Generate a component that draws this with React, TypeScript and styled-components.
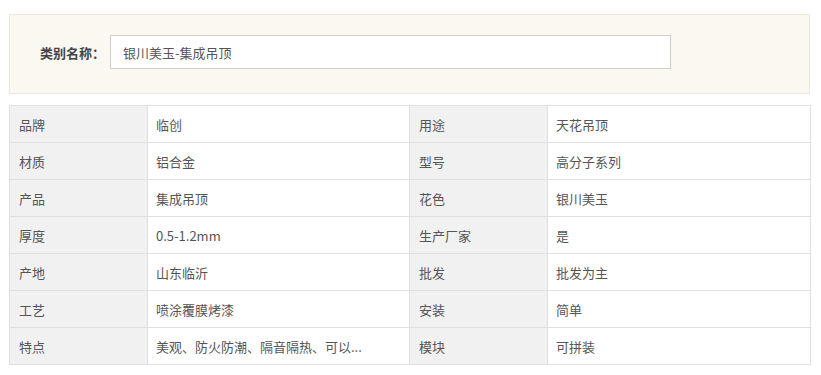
import React from 'react';
import styled, { createGlobalStyle } from 'styled-components';

const GlobalStyle = createGlobalStyle`
  body {
    margin: 0;
    background: #fff;
    font-family: "Microsoft YaHei", "Noto Sans CJK SC", "Noto Sans", sans-serif;
  }
`;

const Page = styled.div`
  width: 801px;
  padding: 14px 0 0 9px;
`;

const Header = styled.div`
  display: flex;
  align-items: center;
  padding: 0 0 4px 30px;
  box-sizing: border-box;
  height: 80px;
  background: #fbf8f2;
  border: 1px solid #ebe6de;
`;

const Label = styled.span`
  font-size: 13px;
  font-weight: bold;
  color: #444;
  margin-right: 5px;
`;

const NameBox = styled.div`
  width: 561px;
  height: 34px;
  box-sizing: border-box;
  border: 1px solid #cfcfcf;
  background: #fff;
  display: flex;
  align-items: center;
  padding-left: 12px;
  font-size: 13px;
  color: #555;
`;

const Table = styled.table`
  margin-top: 11px;
  width: 801px;
  border-collapse: collapse;
  table-layout: fixed;
  font-size: 13px;
  color: #555;
`;

const Cell = styled.td<{ $head?: boolean }>`
  height: 36px;
  padding: 0 0 0 ${(p) => (p.$head ? 9 : 8)}px;
  border: 1px solid #e0e0e0;
  background: ${(p) => (p.$head ? '#f1f1f1' : '#fff')};
  white-space: nowrap;
  overflow: hidden;
`;

const rows: [string, string, string, string][] = [
  ['品牌', '临创', '用途', '天花吊顶'],
  ['材质', '铝合金', '型号', '高分子系列'],
  ['产品', '集成吊顶', '花色', '银川美玉'],
  ['厚度', '0.5-1.2mm', '生产厂家', '是'],
  ['产地', '山东临沂', '批发', '批发为主'],
  ['工艺', '喷涂覆膜烤漆', '安装', '简单'],
  ['特点', '美观、防火防潮、隔音隔热、可以...', '模块', '可拼装'],
];

const App: React.FC = () => (
  <>
    <GlobalStyle />
    <Page>
      <Header>
        <Label>类别名称：</Label>
        <NameBox>银川美玉-集成吊顶</NameBox>
      </Header>
      <Table>
        <colgroup>
          <col style={{ width: 138 }} />
          <col style={{ width: 262 }} />
          <col style={{ width: 138 }} />
          <col style={{ width: 263 }} />
        </colgroup>
        <tbody>
          {rows.map((r) => (
            <tr key={r[0]}>
              <Cell $head>{r[0]}</Cell>
              <Cell>{r[1]}</Cell>
              <Cell $head>{r[2]}</Cell>
              <Cell>{r[3]}</Cell>
            </tr>
          ))}
        </tbody>
      </Table>
    </Page>
  </>
);

export default App;
